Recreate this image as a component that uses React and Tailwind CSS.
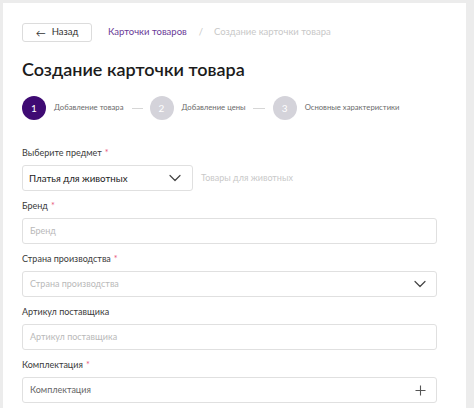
import React from "react";

const Chevron = () => (
  <svg width="12" height="8" viewBox="0 0 12 8" fill="none">
    <path d="M1 1.5 L6 6.5 L11 1.5" stroke="#444" strokeWidth="1.2" strokeLinecap="round" strokeLinejoin="round" />
  </svg>
);

const Plus = () => (
  <svg width="11" height="11" viewBox="0 0 11 11" fill="none">
    <path d="M5.5 0.5 V10.5 M0.5 5.5 H10.5" stroke="#555" strokeWidth="1.1" />
  </svg>
);

function Label({ children, req }) {
  return (
    <div className="text-[9px] leading-[12px] text-[#3a3a3a] h-[12px]">
      {children}
      {req && <span className="text-[#e8577c] ml-[3px]">*</span>}
    </div>
  );
}

function Step({ n, active, text }) {
  return (
    <div className="flex items-center">
      <div
        className={
          "w-[24px] h-[24px] rounded-full flex items-center justify-center text-[10px] text-white " +
          (active ? "bg-[#3f0b73]" : "bg-[#d4d3da]")
        }
      >
        {n}
      </div>
      <span className="ml-[8px] text-[7.7px] text-[#6b6b6b]">{text}</span>
    </div>
  );
}

export default function App() {
  return (
    <div className="w-[474px] h-[408px] bg-[#ececec] overflow-hidden pl-[3px] pt-[3px]" style={{ fontFamily: "Lato, 'Open Sans', sans-serif" }}>
      <div className="w-[463px] h-[420px] bg-white pl-[19px] pr-[29px] pt-[20px]">
        <div className="flex items-center h-[19px]">
          <button className="w-[70px] h-[19px] border border-[#dcdcdc] rounded-[3px] flex items-center justify-center text-[9.5px] text-[#333]">
            <span className="mr-[6px] text-[10px] leading-none">←</span>Назад
          </button>
          <span className="ml-[16px] text-[9.5px] text-[#6a3a97]">Карточки товаров</span>
          <span className="ml-[12px] text-[9.5px] text-[#c8c8c8]">/</span>
          <span className="ml-[11px] text-[9.5px] text-[#c8c8c8]">Создание карточки товара</span>
        </div>
        <h1 className="mt-[16px] text-[18px] leading-[22px] font-semibold text-[#1b1b1b]">Создание карточки товара</h1>
        <div className="mt-[16px] flex items-center h-[24px]">
          <Step n="1" active text="Добавление товара" />
          <span className="ml-[8px] mr-[7px] w-[11px] h-px bg-[#d6d6d6]" />
          <Step n="2" text="Добавление цены" />
          <span className="ml-[7px] mr-[8px] w-[12px] h-px bg-[#d6d6d6]" />
          <Step n="3" text="Основные характеристики" />
        </div>

        <div className="mt-[27px]">
          <Label req>Выберите предмет</Label>
          <div className="mt-[6px] flex items-center">
            <div className="w-[171px] h-[26px] border border-[#e0e0e0] rounded-[3px] flex items-center justify-between pl-[6px] pr-[11px]">
              <span className="text-[9.7px] text-[#222]">Платья для животных</span>
              <Chevron />
            </div>
            <span className="ml-[8px] text-[9px] text-[#c9c9c9]">Товары для животных</span>
          </div>
        </div>

        <div className="mt-[9px]">
          <Label req>Бренд</Label>
          <div className="mt-[6px] h-[26px] border border-[#e0e0e0] rounded-[3px] flex items-center px-[7px]">
            <span className="text-[9px] text-[#b9b9b9]">Бренд</span>
          </div>
        </div>

        <div className="mt-[9px]">
          <Label req>Страна производства</Label>
          <div className="mt-[6px] h-[26px] border border-[#e0e0e0] rounded-[3px] flex items-center justify-between pl-[7px] pr-[10px]">
            <span className="text-[9px] text-[#b9b9b9]">Страна производства</span>
            <Chevron />
          </div>
        </div>

        <div className="mt-[9px]">
          <Label>Артикул поставщика</Label>
          <div className="mt-[6px] h-[26px] border border-[#e0e0e0] rounded-[3px] flex items-center px-[7px]">
            <span className="text-[9px] text-[#b9b9b9]">Артикул поставщика</span>
          </div>
        </div>

        <div className="mt-[9px]">
          <Label req>Комплектация</Label>
          <div className="mt-[6px] h-[26px] border border-[#e0e0e0] rounded-[3px] flex items-center justify-between pl-[7px] pr-[10px]">
            <span className="text-[9px] text-[#666]">Комплектация</span>
            <Plus />
          </div>
        </div>
      </div>
    </div>
  );
}
